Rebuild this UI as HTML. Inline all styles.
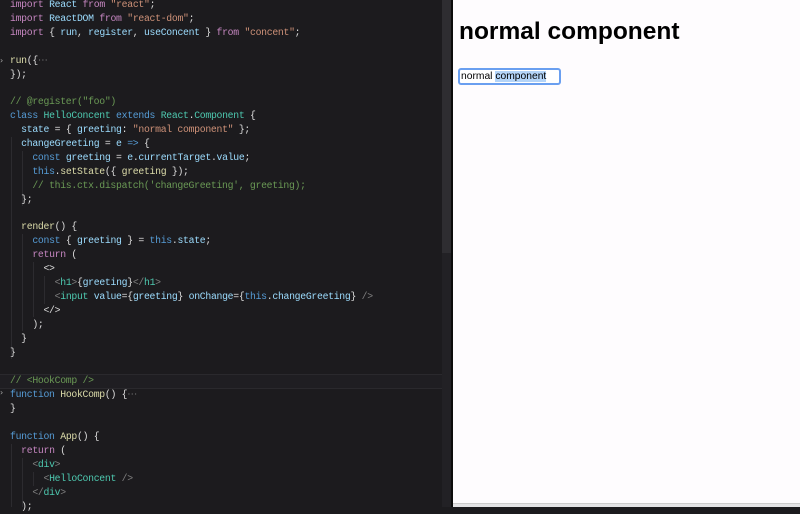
<!DOCTYPE html>
<html><head><meta charset="utf-8"><style>
*{margin:0;padding:0;box-sizing:border-box}
body{width:800px;height:507px;overflow:hidden;background:#1c1b1e;position:relative;font-family:"Liberation Mono",monospace}
#ed{position:absolute;left:0;top:0;width:442px;height:507px;background:#1c1b1e}
.l{position:absolute;left:10px;height:14px;line-height:14px;font-size:9.8px;letter-spacing:-0.3px;white-space:pre;color:#dcdcdc}
.k{color:#c586c0}.b{color:#569cd6}.v{color:#9cdcfe}.s{color:#ce9178}.c{color:#6a9955}.f{color:#dcdcaa}.t{color:#4ec9b0}.g{color:#808080}
.guide{position:absolute;width:1px;background:#2c2b2f}
.arr{position:absolute;left:0;font-size:8px;color:#aaa;font-family:"DejaVu Sans",sans-serif}
#sb{position:absolute;left:442px;top:0;width:9px;height:507px;background:#222125}
#th{position:absolute;left:442px;top:0;width:9px;height:253px;background:#2e2d31}
#div{position:absolute;left:451px;top:0;width:2px;height:507px;background:#0c0c0c}
#pv{position:absolute;left:453px;top:0;width:347px;height:507px;background:#fefcfe;font-family:"Liberation Sans",sans-serif}
h1{position:absolute;left:6px;top:18px;font-size:24.5px;font-weight:bold;color:#000;white-space:nowrap}
#in{position:absolute;left:5px;top:68px;width:103px;height:17px;border:2px solid #6a9ff0;border-radius:3px;background:#fff;font-size:10.3px;line-height:13px;padding-left:1px;white-space:nowrap;color:#000}
#in span{background:#b4d4f8}
#bot{position:absolute;left:453px;top:503px;width:347px;height:4px;background:#e4e4e6;border-top:1px solid #ccc}
#hl{position:absolute;left:0;top:374px;width:442px;height:15px;border-top:1px solid #2a292d;border-bottom:1px solid #2a292d;background:#1f1e22}
</style></head><body>
<div id="ed">
<div id="hl"></div>
<div class="guide" style="left:11px;top:137px;height:222px"></div>
<div class="guide" style="left:22px;top:151px;height:55px"></div>
<div class="guide" style="left:22px;top:234px;height:97px"></div>
<div class="guide" style="left:33px;top:262px;height:55px"></div>
<div class="guide" style="left:44px;top:276px;height:28px"></div>
<div class="guide" style="left:11px;top:444px;height:63px"></div>
<div class="guide" style="left:22px;top:458px;height:49px"></div>
<div class="guide" style="left:33px;top:472px;height:14px"></div>
<span class="arr" style="top:56px">&#x203A;</span>
<span class="arr" style="top:388px">&#x203A;</span>
<div class="l" style="top:-2px"><span class="k">import</span> <span class="v">React</span> <span class="k">from</span> <span class="s">"react"</span>;</div>
<div class="l" style="top:12px"><span class="k">import</span> <span class="v">ReactDOM</span> <span class="k">from</span> <span class="s">"react-dom"</span>;</div>
<div class="l" style="top:26px"><span class="k">import</span> { <span class="v">run</span>, <span class="v">register</span>, <span class="v">useConcent</span> } <span class="k">from</span> <span class="s">"concent"</span>;</div>
<div class="l" style="top:54px"><span class="f">run</span>({<span class="g">⋯</span></div>
<div class="l" style="top:68px">});</div>
<div class="l" style="top:95px"><span class="c">// @register("foo")</span></div>
<div class="l" style="top:109px"><span class="b">class</span> <span class="t">HelloConcent</span> <span class="b">extends</span> <span class="t">React</span>.<span class="t">Component</span> {</div>
<div class="l" style="top:123px">  <span class="v">state</span> = { <span class="v">greeting</span>: <span class="s">"normal component"</span> };</div>
<div class="l" style="top:137px">  <span class="v">changeGreeting</span> = <span class="v">e</span> <span class="b">=&gt;</span> {</div>
<div class="l" style="top:151px">    <span class="b">const</span> <span class="v">greeting</span> = <span class="v">e</span>.<span class="v">currentTarget</span>.<span class="v">value</span>;</div>
<div class="l" style="top:165px">    <span class="b">this</span>.<span class="f">setState</span>({ <span class="f">greeting</span> });</div>
<div class="l" style="top:179px">    <span class="c">// this.ctx.dispatch('changeGreeting', greeting);</span></div>
<div class="l" style="top:193px">  };</div>
<div class="l" style="top:220px">  <span class="f">render</span>() {</div>
<div class="l" style="top:234px">    <span class="b">const</span> { <span class="v">greeting</span> } = <span class="b">this</span>.<span class="v">state</span>;</div>
<div class="l" style="top:248px">    <span class="k">return</span> (</div>
<div class="l" style="top:262px">      &lt;&gt;</div>
<div class="l" style="top:276px">        <span class="g">&lt;</span><span class="t">h1</span><span class="g">&gt;</span>{<span class="v">greeting</span>}<span class="g">&lt;/</span><span class="t">h1</span><span class="g">&gt;</span></div>
<div class="l" style="top:290px">        <span class="g">&lt;</span><span class="t">input</span> <span class="v">value</span>={<span class="v">greeting</span>} <span class="v">onChange</span>={<span class="b">this</span>.<span class="v">changeGreeting</span>} <span class="g">/&gt;</span></div>
<div class="l" style="top:304px">      &lt;/&gt;</div>
<div class="l" style="top:318px">    );</div>
<div class="l" style="top:332px">  }</div>
<div class="l" style="top:346px">}</div>
<div class="l" style="top:374px"><span class="c">// &lt;HookComp /&gt;</span></div>
<div class="l" style="top:388px"><span class="b">function</span> <span class="f">HookComp</span>() {<span class="g">⋯</span></div>
<div class="l" style="top:402px">}</div>
<div class="l" style="top:430px"><span class="b">function</span> <span class="f">App</span>() {</div>
<div class="l" style="top:444px">  <span class="k">return</span> (</div>
<div class="l" style="top:458px">    <span class="g">&lt;</span><span class="t">div</span><span class="g">&gt;</span></div>
<div class="l" style="top:472px">      <span class="g">&lt;</span><span class="t">HelloConcent</span> <span class="g">/&gt;</span></div>
<div class="l" style="top:486px">    <span class="g">&lt;/</span><span class="t">div</span><span class="g">&gt;</span></div>
<div class="l" style="top:500px">  );</div>
</div>
<div id="sb"></div><div id="th"></div><div id="div"></div>
<div id="pv">
<h1>normal component</h1>
<div id="in">normal <span>component</span></div>
</div>
<div id="bot"></div>
</body></html>
